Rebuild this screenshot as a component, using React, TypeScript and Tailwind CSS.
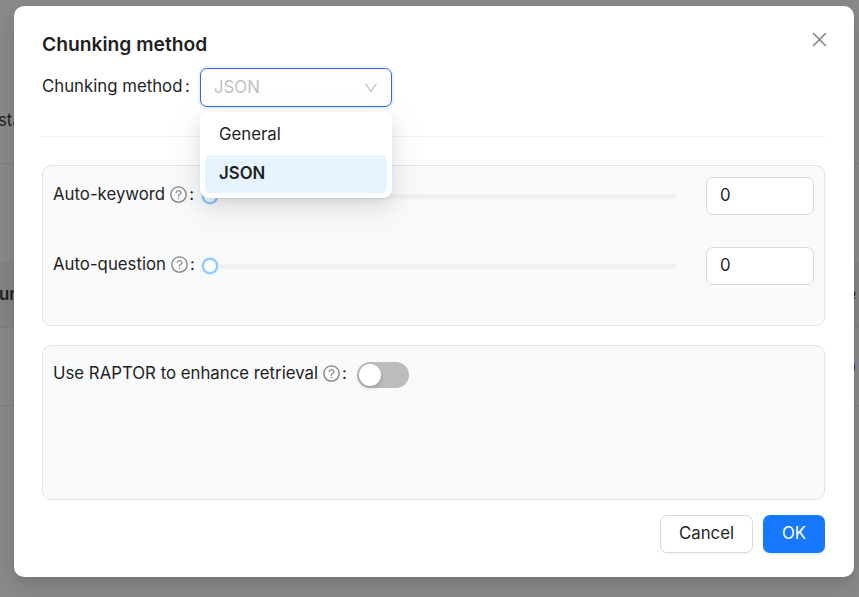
import React from "react";
import { AiOutlineClose, AiOutlineDown, AiOutlineQuestionCircle } from "react-icons/ai";

function Label({ text, help = false }: { text: string; help?: boolean }) {
  return (
    <div className="flex h-6 shrink-0 items-center whitespace-nowrap">
      <span>{text}</span>
      {help && <AiOutlineQuestionCircle className="ml-1 mt-px size-[19px] text-[#858687]" />}
      <span className={help ? "ml-px" : "ml-[2.5px]"}>:</span>
    </div>
  );
}

function SliderRow({ label }: { label: string }) {
  return (
    <div className="flex h-[38px] items-start">
      <div className="w-[148px] pt-[5px]">
        <Label text={label} help />
      </div>
      <div className="flex h-[38px] w-[475px] items-center">
        <div className="ml-[3px] size-3 shrink-0 rounded-full bg-white shadow-[0_0_0_2.4px_#91caff]" />
        <div className="ml-[2px] h-[5px] grow rounded-r-sm bg-[#eff1f3]" />
      </div>
      <div className="ml-[30px] flex h-[38px] w-[108px] shrink-0 items-center rounded-[7px] border border-[#d9d9d9] bg-white pb-[2px] pl-[13px]">
        0
      </div>
    </div>
  );
}

function PageBehind() {
  return (
    <div className="flex h-full flex-col bg-[#8b8b8b]">
      <div className="h-[164px] border-b border-[#7f7f7f] pt-[108px]">
        <span className="-ml-[2px]">status</span>
      </div>
      <div className="h-[98px]" />
      <div className="flex h-[66px] items-center justify-between border-b border-[#7f7f7f] bg-[#868686] pb-[2px] font-semibold">
        <span className="-ml-[1px]">unk</span>
        <span className="mr-[3px] text-[#13202f]">Enable</span>
      </div>
      <div className="flex h-[78px] items-center justify-end border-b border-[#7f7f7f]">
        <div className="mr-[4px] h-[26px] w-[52px] rounded-full bg-[#0d418c]" />
      </div>
    </div>
  );
}

export default function App() {
  return (
    <div className="relative h-[597px] w-[859px] overflow-hidden font-['Inter',sans-serif] text-[16.8px] leading-6 text-[#1f1f1f]">
      <PageBehind />
      <div className="absolute left-[14px] top-[6px] flex h-[571px] w-[840px] flex-col rounded-[10px] bg-white pl-7 pr-[29px] pt-[26px] shadow-[0_7px_19px_0_rgba(0,0,0,0.08),0_4px_7px_-4px_rgba(0,0,0,0.12),0_11px_33px_9px_rgba(0,0,0,0.05)]">
        <div className="flex h-6 items-center justify-between">
          <h2 className="text-[19.25px] font-semibold">Chunking method</h2>
          <AiOutlineClose className="-mr-[5px] -mt-[9px] size-[21px] text-[#8c8c8c]" />
        </div>
        <div className="mt-3 flex h-[39px] items-start">
          <div className="w-[158px] pt-[6px]">
            <Label text="Chunking method" />
          </div>
          <div className="relative h-[39px] w-[192px]">
            <div className="flex h-full items-center justify-between rounded-[7px] border border-[#2f6fd0] bg-white pl-[13px] pr-[12px] text-[#bfbfbf] shadow-[0_0_0_2px_rgba(5,145,255,0.1)]">
              <span className="pb-px">JSON</span>
              <AiOutlineDown className="size-4" />
            </div>
            <div className="absolute left-0 top-[44px] z-10 h-[86px] w-[192px] rounded-[9px] bg-white p-[5px] shadow-[0_7px_19px_0_rgba(0,0,0,0.08),0_4px_7px_-4px_rgba(0,0,0,0.12),0_11px_33px_9px_rgba(0,0,0,0.05)]">
              <div className="flex h-[38px] items-center pb-[4px] pl-[14px]">General</div>
              <div className="flex h-[38px] items-center rounded-[5px] bg-[#e6f4ff] pb-[3px] pl-[14px] font-semibold">JSON</div>
            </div>
          </div>
        </div>
        <div className="mt-[29px] h-px shrink-0 bg-[#f0f0f0]" />
        <div className="mt-[28px] flex h-[161px] flex-col gap-8 rounded-[9px] border border-[#e2e3e5] bg-[#f9fafc] px-[10px] pt-[11px]">
          <SliderRow label="Auto-keyword" />
          <SliderRow label="Auto-question" />
        </div>
        <div className="mt-[19px] flex h-[155px] items-start rounded-[9px] border border-[#e2e3e5] bg-[#f9fafc] px-[10px] pt-[15px]">
          <div className="w-[304px]">
            <Label text="Use RAPTOR to enhance retrieval" help />
          </div>
          <div className="mt-[1px] h-[26px] w-[52px] rounded-full bg-[#bbbcbd] p-[2px]">
            <div className="size-[22px] rounded-full bg-white shadow-[0_2px_4px_rgba(0,35,11,0.2)]" />
          </div>
        </div>
        <div className="mt-[15px] flex justify-end gap-[10px]">
          <button className="h-[38px] w-[93px] rounded-[7px] border border-[#d9d9d9] bg-white pb-[2px] shadow-[0_2px_0_rgba(0,0,0,0.02)]">Cancel</button>
          <button className="h-[38px] w-[62px] rounded-[7px] bg-[#1677ff] pb-[2px] text-white shadow-[0_2px_0_rgba(5,145,255,0.1)]">OK</button>
        </div>
      </div>
    </div>
  );
}
